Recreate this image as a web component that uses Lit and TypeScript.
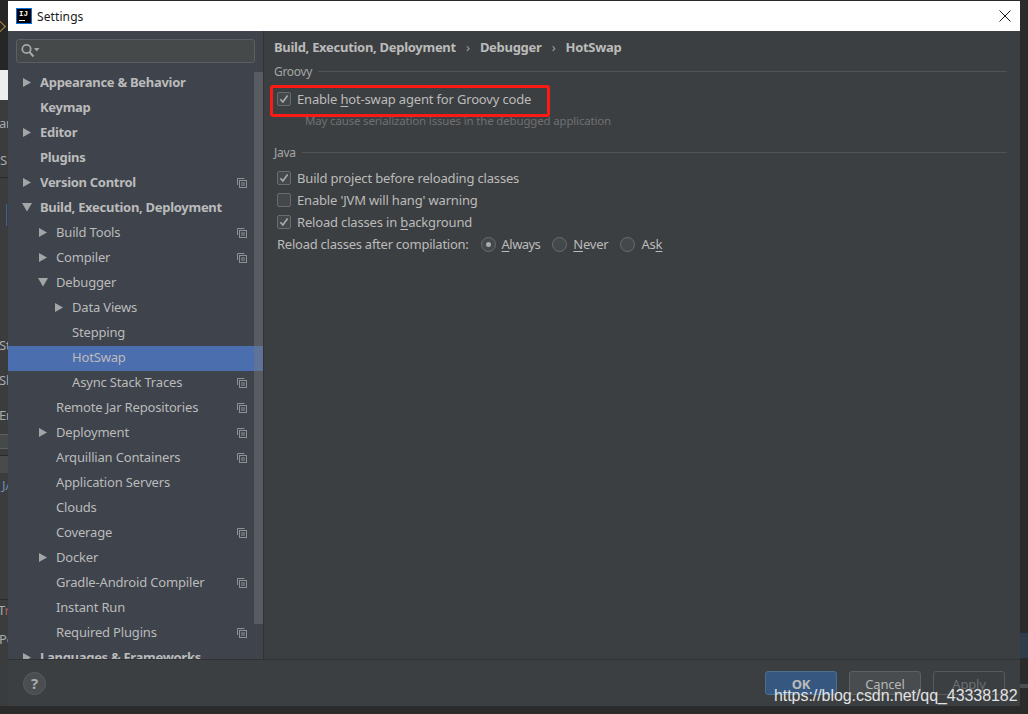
import { LitElement, html, css, svg, nothing } from "lit";
import { customElement } from "lit/decorators.js";

type Node = { t: string; lvl: number; arrow?: "r" | "d"; copy?: boolean; sel?: boolean };

const TREE: Node[] = [
  { t: "Appearance & Behavior", lvl: 0, arrow: "r" },
  { t: "Keymap", lvl: 0 },
  { t: "Editor", lvl: 0, arrow: "r" },
  { t: "Plugins", lvl: 0 },
  { t: "Version Control", lvl: 0, arrow: "r", copy: true },
  { t: "Build, Execution, Deployment", lvl: 0, arrow: "d" },
  { t: "Build Tools", lvl: 1, arrow: "r", copy: true },
  { t: "Compiler", lvl: 1, arrow: "r", copy: true },
  { t: "Debugger", lvl: 1, arrow: "d" },
  { t: "Data Views", lvl: 2, arrow: "r" },
  { t: "Stepping", lvl: 2 },
  { t: "HotSwap", lvl: 2, sel: true },
  { t: "Async Stack Traces", lvl: 2, copy: true },
  { t: "Remote Jar Repositories", lvl: 1, copy: true },
  { t: "Deployment", lvl: 1, arrow: "r", copy: true },
  { t: "Arquillian Containers", lvl: 1, copy: true },
  { t: "Application Servers", lvl: 1 },
  { t: "Clouds", lvl: 1 },
  { t: "Coverage", lvl: 1, copy: true },
  { t: "Docker", lvl: 1, arrow: "r" },
  { t: "Gradle-Android Compiler", lvl: 1, copy: true },
  { t: "Instant Run", lvl: 1 },
  { t: "Required Plugins", lvl: 1, copy: true },
  { t: "Languages & Frameworks", lvl: 0, arrow: "r" },
];

const copyIcon = svg`<svg class="copy" width="10" height="10" viewBox="0 0 10 10" fill="none" stroke="#8f9294" stroke-width="1"><path d="M.5 7V.5H7.5"/><rect x="2.5" y="2.5" width="7" height="7"/><path d="M4 5H8M4 7H8"/></svg>`;

const checkMark = svg`<svg width="14" height="14" viewBox="0 0 14 14" fill="none"><path d="M3.4 7.2 L5.9 10 L10.6 3.6" stroke="#a9abad" stroke-width="1.7"/></svg>`;

@customElement("app-root")
export class AppRoot extends LitElement {
  static styles = css`
    :host {
      display: block;
      position: relative;
      width: 1028px;
      height: 714px;
      overflow: hidden;
      background: #2b2b2b;
      font-family: "Noto Sans", "Open Sans", sans-serif;
      font-size: 13px;
      letter-spacing: -0.17px;
      color: #bbbbbb;
    }
    .desk-left {
      position: absolute;
      left: 0;
      top: 0;
      width: 8px;
      height: 714px;
      overflow: hidden;
      background: #3a3c3e;
    }
    .desk-item { position: absolute; left: 0; }
    .dk-top { top: 0; width: 8px; height: 70px; background: #262626; }
    .dk-white { top: 70px; width: 8px; height: 30px; background: #eeeeee; }
    .dk-line { top: 177px; width: 8px; height: 1px; background: #2a2a2a; }
    .dk-blue { top: 204px; left: 6px; width: 1px; height: 22px; background: #3d62a0; }
    .dk-line2 { top: 455px; width: 8px; height: 1px; background: #2a2a2a; }
    .dk-band { top: 456px; width: 8px; height: 17px; background: #484a4c; }
    .dk-line3 { top: 599px; width: 8px; height: 1px; background: #2a2a2a; }
    .dk-box { top: 434px; left: -4px; width: 11px; height: 13px; border: 1px solid #5b5d5f; background: #45494a; }
    .dk-bottom { top: 706px; width: 8px; height: 8px; background: #2b2b2b; }
    .dk-text { font-size: 13px; line-height: 16px; color: #a9abad; }
    .dk-blue-text { color: #6d8fb0; }
    .dk-red { color: #a9605a; }
    .chev {
      top: 22px;
      left: -5px;
      width: 8px;
      height: 8px;
      border-top: 1px solid #b98d3e;
      border-right: 1px solid #b98d3e;
      transform: rotate(45deg);
    }
    .desk-right {
      position: absolute;
      left: 1020px;
      top: 0;
      width: 8px;
      height: 714px;
      background: #2b2b2b;
    }
    .dr-blue { top: 633px; width: 8px; height: 25px; background: #2f3c4b; }
    .dr-grey { top: 684px; width: 8px; height: 4px; background: #4b4d4f; }

    .win {
      position: absolute;
      left: 8px;
      top: 1px;
      width: 1012px;
      height: 705px;
      display: flex;
      flex-direction: column;
      background: #3c3f41;
    }
    .titlebar {
      flex: none;
      height: 30px;
      background: #ffffff;
      display: flex;
      align-items: center;
      padding: 0 8px 0 8px;
      gap: 5px;
      color: #1a1a1a;
      font-size: 12px;
      letter-spacing: 0.1px;
    }
    .logo {
      width: 16px;
      height: 16px;
      box-sizing: border-box;
      border: 1px solid #0a6fe0;
      background: #000;
      color: #fff;
      font-family: "Liberation Mono", monospace;
      font-weight: 700;
      font-size: 7.5px;
      line-height: 9px;
      letter-spacing: 0;
      padding: 1px 0 0 2px;
      flex: none;
    }
    .logo i {
      display: block;
      width: 6px;
      height: 1px;
      background: #fff;
      margin-top: 1px;
    }
    .title { flex: 1; }
    .close { display: block; margin-right: 1px; }

    .body {
      flex: 1;
      min-height: 0;
      display: flex;
    }
    .side {
      flex: none;
      width: 255px;
      background: #3e434c;
      border-right: 1px solid #303234;
      display: flex;
      flex-direction: column;
      min-height: 0;
      position: relative;
    }
    .search {
      flex: none;
      margin: 8px;
      height: 24px;
      box-sizing: border-box;
      background: #45494a;
      border: 1px solid #5c5f61;
      border-radius: 3px;
      display: flex;
      align-items: center;
      padding-left: 4px;
    }
    .tree {
      flex: 1;
      min-height: 0;
      overflow: hidden;
      position: relative;
    }
    .row {
      height: 25px;
      box-sizing: border-box;
      padding-bottom: 4px;
      display: flex;
      align-items: center;
      position: relative;
      white-space: nowrap;
      line-height: 18px;
    }
    .row.top { font-weight: 700; letter-spacing: -0.29px; }
    .row.sel { background: #4b6eaf; }
    .arrow { position: absolute; top: 7px; display: block; }
    .copy { position: absolute; left: 229px; top: 7px; display: block; }
    .thumb {
      position: absolute;
      right: 0;
      top: 41px;
      width: 9px;
      height: 552px;
      background: rgba(120, 122, 126, 0.45);
    }

    .main {
      flex: 1;
      min-width: 0;
      padding: 0 13px 0 10px;
      display: flex;
      flex-direction: column;
      background: #3c3f41;
    }
    .crumbs {
      height: 16px;
      margin-top: 8px;
      display: flex;
      align-items: center;
      font-weight: 700;
      letter-spacing: -0.29px;
      line-height: 16px;
      white-space: nowrap;
    }
    .sep {
      width: 24px;
      text-align: center;
      font-weight: 400;
      color: #a0a2a4;
    }
    .group {
      height: 16px;
      display: flex;
      align-items: center;
      gap: 6px;
      font-size: 12px;
      letter-spacing: -0.3px;
      color: #a4a6a8;
      line-height: 16px;
    }
    .group .rule { flex: 1; height: 1px; background: #515355; margin-top: -2px; }
    .g1 { margin-top: 9px; }
    .g2 { margin-top: 14px; }
    .opts { display: flex; flex-direction: column; padding-left: 3px; }
    .o1 { margin-top: 8px; }
    .o2 { margin-top: 6px; }
    .opt {
      height: 22px;
      display: flex;
      align-items: center;
      gap: 6px;
      white-space: nowrap;
    }
    .cb {
      flex: none;
      width: 14px;
      height: 14px;
      box-sizing: border-box;
      border: 1px solid #6b6b6b;
      border-radius: 2px;
      background: #43494a;
      position: relative;
      display: block;
    }
    .cb svg { position: absolute; left: -1px; top: -1px; display: block; }
    .hint {
      padding-left: 31px;
      height: 20px;
      line-height: 20px;
      font-size: 11.5px;
      letter-spacing: -0.17px;
      color: #6e7072;
      white-space: nowrap;
      margin-top: 1px;
    }
    u { text-underline-offset: 2px; text-decoration-thickness: 1px; }
    .radios { display: flex; align-items: center; height: 22px; white-space: nowrap; letter-spacing: -0.22px; }
    .radio {
      flex: none;
      width: 15px;
      height: 15px;
      box-sizing: border-box;
      border: 1px solid #6b6b6b;
      border-radius: 50%;
      background: #43494a;
      display: flex;
      align-items: center;
      justify-content: center;
      margin-right: 6px;
    }
    .radio b { width: 5px; height: 5px; border-radius: 50%; background: #a9abad; display: block; }
    .rl { margin-right: 12px; }
    .rl.tight { letter-spacing: -0.55px; }
    .rlead { margin-right: 12px; letter-spacing: -0.25px; }

    .footer {
      flex: none;
      height: 47px;
      box-sizing: border-box;
      border-top: 1px solid #303234;
      background: #3c3f41;
      display: flex;
      align-items: center;
      padding: 0 15px;
    }
    .help {
      width: 23px;
      height: 23px;
      box-sizing: border-box;
      border: 1px solid #595b5d;
      border-radius: 50%;
      background: #4b4e50;
      color: #a9abad;
      font-weight: 700;
      font-size: 15px;
      line-height: 20px;
      text-align: center;
    }
    .btns { margin-left: auto; display: flex; gap: 12px; }
    .btn {
      width: 72px;
      height: 24px;
      box-sizing: border-box;
      border: 1px solid #5e6060;
      border-radius: 3px;
      background: #484c4e;
      color: #b5b7b9;
      text-align: center;
      line-height: 24px;
    }
    .btn.ok { background: #365880; border-color: #4c708c; font-weight: 700; color: #bbbbbb; }
    .btn.off { background: #3c3f41; border-color: #585a5c; color: #6e7072; }

    .redbox {
      position: absolute;
      left: 270px;
      top: 85px;
      width: 280px;
      height: 32px;
      box-sizing: border-box;
      border: 3px solid #fb1a14;
      border-radius: 3px;
    }
    .mark {
      position: absolute;
      left: 774px;
      top: 686px;
      font-family: "Liberation Sans", Arial, sans-serif;
      font-size: 16px;
      letter-spacing: -0.06px;
      line-height: 20px;
      color: #e2e3e4;
      white-space: nowrap;
    }
  `;

  private renderRow(n: Node) {
    const textLeft = 32 + n.lvl * 16;
    const arrowLeft = textLeft - 17;
    return html`<div class="row ${n.lvl === 0 ? "top" : ""} ${n.sel ? "sel" : ""}" style="padding-left:${textLeft}px">
      ${n.arrow === "r"
        ? html`<svg class="arrow" style="left:${arrowLeft}px" width="9" height="9" viewBox="0 0 9 9"><path d="M0 0 L8 4.5 L0 9Z" fill="#a3a5a7"/></svg>`
        : n.arrow === "d"
        ? html`<svg class="arrow" style="left:${arrowLeft - 1}px" width="10" height="9" viewBox="0 0 10 9"><path d="M0 0 L10 0 L5 8.5Z" fill="#a3a5a7"/></svg>`
        : nothing}
      <span>${n.t}</span>
      ${n.copy ? copyIcon : nothing}
    </div>`;
  }

  private cb(on: boolean, label: unknown) {
    return html`<div class="opt"><span class="cb">${on ? checkMark : nothing}</span><span>${label}</span></div>`;
  }

  render() {
    return html`
      <div class="desk-left">
        <div class="desk-item dk-top"></div>
        <div class="desk-item chev"></div>
        <div class="desk-item dk-white"></div>
        <div class="desk-item dk-text" style="top:115px;left:-1px">ar</div>
        <div class="desk-item dk-text" style="top:152px;left:0">S</div>
        <div class="desk-item dk-line"></div>
        <div class="desk-item dk-blue"></div>
        <div class="desk-item dk-text" style="top:337px;left:-1px">St</div>
        <div class="desk-item dk-text" style="top:372px;left:-1px">Sh</div>
        <div class="desk-item dk-text" style="top:407px;left:-1px">En</div>
        <div class="desk-item dk-box"></div>
        <div class="desk-item dk-line2"></div>
        <div class="desk-item dk-band"></div>
        <div class="desk-item dk-text dk-blue-text" style="top:477px;left:2px">JA</div>
        <div class="desk-item dk-line3"></div>
        <div class="desk-item dk-text" style="top:602px;left:-2px">T<span class="dk-red">r</span></div>
        <div class="desk-item dk-text" style="top:631px;left:-1px">Po</div>
        <div class="desk-item dk-bottom"></div>
      </div>
      <div class="desk-right">
        <div class="desk-item dr-blue"></div>
        <div class="desk-item dr-grey"></div>
      </div>

      <div class="win">
        <div class="titlebar">
          <div class="logo">IJ<i></i></div>
          <span class="title">Settings</span>
          <svg class="close" width="12" height="12" viewBox="0 0 12 12"><path d="M.5 .5 L11.5 11.5 M11.5 .5 L.5 11.5" stroke="#1a1a1a" stroke-width="1"/></svg>
        </div>
        <div class="body">
          <div class="side">
            <div class="search">
              <svg width="20" height="16" viewBox="0 0 20 16" fill="none">
                <circle cx="5.5" cy="6" r="4.2" stroke="#a4a6a8" stroke-width="1.8"/>
                <path d="M8.5 9 L12.5 13.5" stroke="#a4a6a8" stroke-width="2.2"/>
                <path d="M13 5 H18.5 L15.7 8.5Z" fill="#a4a6a8"/>
              </svg>
            </div>
            <div class="tree">
              ${TREE.map((n) => this.renderRow(n))}
            </div>
            <div class="thumb"></div>
          </div>
          <div class="main">
            <div class="crumbs">
              <span>Build, Execution, Deployment</span><span class="sep">›</span>
              <span>Debugger</span><span class="sep">›</span>
              <span>HotSwap</span>
            </div>
            <div class="group g1"><span>Groovy</span><span class="rule"></span></div>
            <div class="opts o1">
              ${this.cb(true, html`Enable <u>h</u>ot-swap agent for Groovy code`)}
            </div>
            <div class="hint">May cause serialization issues in the debugged application</div>
            <div class="group g2"><span>Java</span><span class="rule"></span></div>
            <div class="opts o2">
              ${this.cb(true, html`Build project before reloading classes`)}
              ${this.cb(false, html`Enable 'JVM will hang' warning`)}
              ${this.cb(true, html`Reload classes in <u>b</u>ackground`)}
              <div class="radios">
                <span class="rlead">Reload classes after compilation:</span>
                <span class="radio"><b></b></span><span class="rl tight"><u>A</u>lways</span>
                <span class="radio"></span><span class="rl"><u>N</u>ever</span>
                <span class="radio"></span><span>As<u>k</u></span>
              </div>
            </div>
          </div>
        </div>
        <div class="footer">
          <div class="help">?</div>
          <div class="btns">
            <div class="btn ok">OK</div>
            <div class="btn">Cancel</div>
            <div class="btn off">Apply</div>
          </div>
        </div>
      </div>

      <div class="redbox"></div>
      <div class="mark">https://blog.csdn.net/qq_43338182</div>
    `;
  }
}
